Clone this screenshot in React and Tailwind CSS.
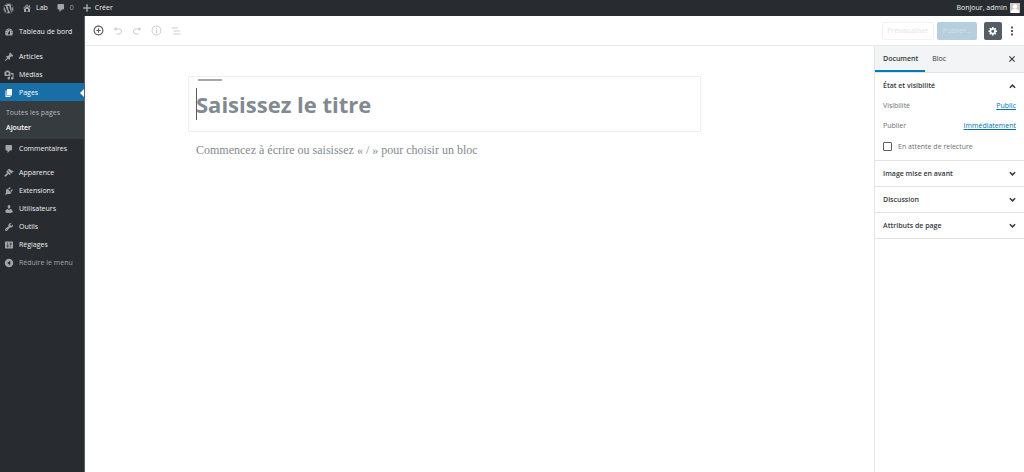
import React from "react";
import { FaWordpress } from "react-icons/fa";

const icons = {
  dashboard:
    "M3.76 17h12.48c1.34-1.63 1.76-3.73 1.76-6 0-4.41-3.58-8-8-8s-8 3.59-8 8c0 2.27.42 4.37 1.76 6zM10 4c.55 0 1 .45 1 1s-.45 1-1 1-1-.45-1-1 .45-1 1-1zM6 6c.55 0 1 .45 1 1s-.45 1-1 1-1-.45-1-1 .45-1 1-1zm8 0c.55 0 1 .45 1 1s-.45 1-1 1-1-.45-1-1 .45-1 1-1zm-5.37 5.55L12 7v6c0 1.1-.9 2-2 2s-2-.9-2-2c0-.57.24-1.08.63-1.45zM4 10c.55 0 1 .45 1 1s-.45 1-1 1-1-.45-1-1 .45-1 1-1zm12 0c.55 0 1 .45 1 1s-.45 1-1 1-1-.45-1-1 .45-1 1-1z",
  pin: "M10.44 3.02l1.82-1.82 6.36 6.35-1.83 1.82c-1.05-.68-2.48-.57-3.41.36l-.75.75c-.92.93-1.04 2.35-.35 3.41l-1.83 1.82-2.41-2.41-2.8 2.79c-.42.42-3.38 2.71-3.8 2.29s1.86-3.39 2.28-3.81l2.79-2.79L4.1 9.36l1.83-1.82c1.05.69 2.48.57 3.4-.36l.75-.75c.93-.92 1.05-2.35.36-3.41z",
  media:
    "M13 11V4c0-.55-.45-1-1-1h-1.67L9 1H5L3.67 3H2c-.55 0-1 .45-1 1v7c0 .55.45 1 1 1h10c.55 0 1-.45 1-1zM7 4.5c1.38 0 2.5 1.12 2.5 2.5S8.38 9.5 7 9.5 4.5 8.38 4.5 7 5.62 4.5 7 4.5zM14 6h5v10.5c0 1.38-1.12 2.5-2.5 2.5S14 17.88 14 16.5s1.12-2.5 2.5-2.5c.17 0 .34.02.5.05V9h-3V6zm-4 8.05V13h2v3.5c0 1.38-1.12 2.5-2.5 2.5S7 17.88 7 16.5 8.12 14 9.5 14c.17 0 .34.02.5.05z",
  page: "M6 15V2h10v13H6zm-1 1h8v2H3V5h2v11z",
  comment:
    "M5 2h9c1.1 0 2 .9 2 2v7c0 1.1-.9 2-2 2h-2l-5 5v-5H5c-1.1 0-2-.9-2-2V4c0-1.1.9-2 2-2z",
  appearance:
    "M14.48 11.06L7.41 3.99l1.5-1.5c.5-.56 2.3-.47 3.51.32 1.21.8 1.43 1.28 2.91 2.1 1.18.64 2.45 1.26 4.45.85zm-.71.71L6.7 4.7 4.93 6.47c-.39.39-.39 1.02 0 1.41l1.06 1.06c.39.39.39 1.03 0 1.42-.6.6-1.43 1.11-2.21 1.69-.35.26-.7.53-1.01.84C1.43 14.23.4 16.08 1.4 17.07c.99 1 2.84-.03 4.18-1.36.31-.31.58-.66.85-1.02.57-.78 1.08-1.61 1.69-2.21.39-.39 1.02-.39 1.41 0l1.06 1.06c.39.39 1.02.39 1.41 0z",
  plugins:
    "M13.11 4.36L9.87 7.6 8 5.73l3.24-3.24c.35-.34 1.05-.2 1.56.32.52.51.66 1.21.31 1.55zm-8 1.77l.91-1.12 9.01 9.01-1.19.84c-.71.71-2.63 1.16-3.82 1.16H6.14L4.9 17.26c-.59.59-1.54.59-2.12 0-.59-.58-.59-1.53 0-2.12l1.24-1.24v-3.88c0-1.13.4-3.19 1.09-3.89zm7.26 3.97l3.24-3.24c.34-.35 1.04-.21 1.55.31.52.51.66 1.21.31 1.55l-3.24 3.25z",
  users:
    "M10 9.25c-2.27 0-2.73-3.44-2.73-3.44C7 4.02 7.82 2 9.97 2c2.16 0 2.98 2.02 2.71 3.81 0 0-.41 3.44-2.68 3.44zm0 2.57L12.72 10c2.39 0 4.52 2.33 4.52 4.53v2.49s-3.65 1.13-7.24 1.13c-3.65 0-7.24-1.13-7.24-1.13v-2.49c0-2.25 1.94-4.48 4.47-4.48z",
  tools:
    "M16.68 9.77c-1.34 1.34-3.3 1.67-4.95.99l-5.41 6.52c-.99.99-2.59.99-3.58 0s-.99-2.59 0-3.57l6.52-5.42c-.68-1.65-.35-3.61.99-4.95 1.28-1.28 3.12-1.62 4.72-1.06l-2.89 2.89 2.82 2.82 2.86-2.87c.53 1.58.18 3.39-1.08 4.65zM3.81 16.21c.4.39 1.04.39 1.43 0 .4-.4.4-1.04 0-1.43-.39-.4-1.03-.4-1.43 0-.39.39-.39 1.03 0 1.43z",
  settings:
    "M18 16V4c0-.55-.45-1-1-1H3c-.55 0-1 .45-1 1v12c0 .55.45 1 1 1h14c.55 0 1-.45 1-1zM8 11h1c.55 0 1 .45 1 1s-.45 1-1 1H8v1.5c0 .28-.22.5-.5.5s-.5-.22-.5-.5V13H6c-.55 0-1-.45-1-1s.45-1 1-1h1V5.5c0-.28.22-.5.5-.5s.5.22.5.5V11zm5-2h-1c-.55 0-1-.45-1-1s.45-1 1-1h1V5.5c0-.28.22-.5.5-.5s.5.22.5.5V7h1c.55 0 1 .45 1 1s-.45 1-1 1h-1v5.5c0 .28-.22.5-.5.5s-.5-.22-.5-.5V9z",
  collapse: "M10 1.500a8.500 8.500 0 1 0 0 17 8.500 8.500 0 0 0 0-17zm2.500 13L6.500 10l6-4.500z",
  home: "M16 8.5l1.53 1.53-1.06 1.06L10 4.6l-6.47 6.49-1.06-1.06L10 2.5l4 4v-2h2v4zm-6-2.46l6 5.99V18H4v-5.97zM12 17v-5H8v5h4z",
  plus: "M17.500 8.500h-6V2.500h-3v6h-6v3h6v6h3v-6h6z",
  gear: "M18 12h-2.180c-.17.7-.44 1.350-.81 1.930l1.540 1.540-2.100 2.100-1.540-1.540c-.58.36-1.230.63-1.910.79V19H8v-2.180c-.68-.16-1.330-.43-1.910-.79l-1.540 1.540-2.120-2.120 1.540-1.540c-.36-.58-.63-1.230-.79-1.910H1V9.030h2.170c.16-.7.44-1.350.8-1.940L2.430 5.550l2.100-2.100 1.540 1.540c.58-.37 1.240-.64 1.930-.81V2h3v2.180c.68.16 1.330.43 1.910.79l1.540-1.540 2.120 2.120-1.540 1.540c.36.59.64 1.240.8 1.940H18V12zm-8.500 1.500c1.660 0 3-1.340 3-3s-1.340-3-3-3-3 1.340-3 3 1.340 3 3 3z",
  insert:
    "M10 1c-5 0-9 4-9 9s4 9 9 9 9-4 9-9-4-9-9-9zm0 16c-3.900 0-7-3.100-7-7s3.100-7 7-7 7 3.100 7 7-3.100 7-7 7zm1-11H9v3H6v2h3v3h2v-3h3V9h-3V6z",
  undo: "M12 5H7V2L1 6l6 4V7h5c2.200 0 4 1.800 4 4s-1.800 4-4 4H7v2h5c3.300 0 6-2.700 6-6s-2.700-6-6-6z",
  redo: "M8 5h5V2l6 4-6 4V7H8c-2.200 0-4 1.800-4 4s1.800 4 4 4h5v2H8c-3.300 0-6-2.700-6-6s2.700-6 6-6z",
  info: "M10 1a9 9 0 1 0 0 18 9 9 0 0 0 0-18zm0 16.200a7.200 7.200 0 1 1 0-14.400 7.200 7.200 0 0 1 0 14.400zM9 9h2v6H9zM9 5h2v2H9z",
  outline: "M1 3h13v2H1zM5 9h13v2H5zM5 15h14v2H5z",
  dots: "M8 1h4v4H8zm0 7h4v4H8zm0 7h4v4H8z",
  close:
    "M16 5.500L11.500 10l4.500 4.500-1.500 1.500-4.500-4.500L5.500 16 4 14.500 8.500 10 4 5.500 5.500 4l4.500 4.500L14.500 4z",
  down: "M4 5l6 6 6-6 3 3-9 9-9-9z",
  up: "M4 15l6-6 6 6 3-3-9-9-9 9z",
};

function Icon({ name, className = "size-[10px]" }) {
  return (
    <svg viewBox="0 0 20 20" fill="currentColor" fillRule="evenodd" aria-hidden="true" className={`shrink-0 ${className}`}>
      <path d={icons[name]} />
    </svg>
  );
}

function MenuItem({ icon, label }) {
  return (
    <a href="#" className="flex h-[18px] items-center gap-[5px] pl-1 pt-px text-[#eee]">
      <Icon name={icon} className="size-[10px] text-[#a0a5aa]" />
      {label}
    </a>
  );
}

function AdminBar() {
  return (
    <header className="flex h-4 shrink-0 items-center bg-[#282c31] text-[#eee]">
      <a href="#" aria-label="WordPress" className="ml-[3px] text-[#a0a5aa]">
        <FaWordpress className="size-[11px]" />
      </a>
      <a href="#" className="ml-2 flex items-center gap-1">
        <Icon name="home" className="size-[10px] text-[#a0a5aa]" />
        Lab
      </a>
      <a href="#" className="ml-2 flex items-center gap-1 text-[#a0a5aa]">
        <Icon name="comment" />
        0
      </a>
      <a href="#" className="ml-2 flex items-center gap-[3px]">
        <Icon name="plus" className="size-[10px] text-[#a0a5aa]" />
        Créer
      </a>
      <a href="#" className="ml-auto mr-1 flex items-center gap-[3px]">
        Bonjour, admin
        <svg viewBox="0 0 20 20" className="size-[10px] bg-[#c8c8c8]" aria-hidden="true">
          <circle cx="10" cy="7" r="4.500" fill="#fff" />
          <path d="M2 20c0-6 3-8 8-8s8 2 8 8z" fill="#fff" />
        </svg>
      </a>
    </header>
  );
}

function Sidebar() {
  return (
    <nav className="w-[85px] shrink-0 border-r border-[#555d66] bg-[#282c31] pt-[6px]">
      <MenuItem icon="dashboard" label="Tableau de bord" />
      <div className="mt-[7px]">
        <MenuItem icon="pin" label="Articles" />
        <MenuItem icon="media" label="Médias" />
        <a href="#" className="relative flex h-[18px] items-center gap-[5px] bg-[#186fa7] pl-1 pt-px text-white">
          <Icon name="page" />
          Pages
          <span className="absolute right-0 border-4 border-transparent border-r-white" />
        </a>
        <div className="flex h-[38px] flex-col justify-center gap-[5px] bg-[#363b40] pl-[6px] leading-[10px]">
          <a href="#" className="text-[#b4b9be]">Toutes les pages</a>
          <a href="#" className="font-semibold text-white">Ajouter</a>
        </div>
        <MenuItem icon="comment" label="Commentaires" />
      </div>
      <div className="mt-[6px]">
        <MenuItem icon="appearance" label="Apparence" />
        <MenuItem icon="plugins" label="Extensions" />
        <MenuItem icon="users" label="Utilisateurs" />
        <MenuItem icon="tools" label="Outils" />
        <MenuItem icon="settings" label="Réglages" />
        <button type="button" className="flex h-[18px] items-center gap-[5px] pl-1 pt-px text-[#a0a5aa]">
          <Icon name="collapse" />
          Réduire le menu
        </button>
      </div>
    </nav>
  );
}

function Toolbar() {
  return (
    <div className="flex h-[30px] shrink-0 items-center border-b border-[#e9eaec] pl-2 pr-[7px] text-[#555d66]">
      <div className="flex items-center gap-[9px]">
        <button type="button" aria-label="Ajouter un bloc"><Icon name="insert" className="size-[11px]" /></button>
        <button type="button" aria-label="Annuler" disabled className="text-[#ccced1]"><Icon name="undo" className="size-[10px]" /></button>
        <button type="button" aria-label="Rétablir" disabled className="text-[#ccced1]"><Icon name="redo" className="size-[10px]" /></button>
        <button type="button" aria-label="Informations" disabled className="text-[#ccced1]"><Icon name="info" className="size-[11px]" /></button>
        <button type="button" aria-label="Navigation" disabled className="text-[#ccced1]"><Icon name="outline" className="size-[10px]" /></button>
      </div>
      <div className="ml-auto flex items-center">
        <button type="button" disabled className="h-[18px] w-[52px] rounded-[2px] border border-[#f3f3f4] text-[#e2e4e7]">Prévisualiser</button>
        <button type="button" disabled className="ml-[3px] h-[18px] w-10 rounded-[2px] bg-[#b5cfdc] text-[#d0e1ea]">Publier…</button>
        <button type="button" aria-label="Réglages" className="ml-[7px] flex size-[18px] items-center justify-center rounded-[2px] bg-[#555d66] text-white">
          <Icon name="gear" />
        </button>
        <button type="button" aria-label="Plus d’outils" className="ml-[5px]"><Icon name="dots" /></button>
      </div>
    </div>
  );
}

function Panel({ title }) {
  return (
    <button type="button" className="flex h-[26px] w-full items-center justify-between border-b border-[#e2e4e7] px-2 font-semibold text-[#32373c]">
      {title}
      <Icon name="down" className="size-[7px]" />
    </button>
  );
}

function Settings() {
  return (
    <aside className="w-[150px] shrink-0 border-l border-[#e2e4e7] text-[#6c7178]">
      <div className="flex h-[27px] items-stretch border-b border-[#e2e4e7] bg-[#f3f4f5] pr-[7px]">
        <button type="button" className="px-[7px] pl-2 font-semibold text-[#32373c] shadow-[inset_0_-2px_0_#007cba]">Document</button>
        <button type="button" className="px-[7px] text-[#32373c]">Bloc</button>
        <button type="button" aria-label="Fermer" className="ml-auto text-[#32373c]"><Icon name="close" /></button>
      </div>
      <section className="border-b border-[#e2e4e7] px-2">
        <button type="button" className="flex h-[26px] w-full items-center justify-between font-semibold text-[#32373c]">
          État et visibilité
          <Icon name="up" className="size-[7px]" />
        </button>
        <div className="flex h-5 items-start justify-between pt-px">
          Visibilité
          <a href="#" className="text-[#0073aa] underline">Public</a>
        </div>
        <div className="flex h-5 items-start justify-between pt-px">
          Publier
          <a href="#" className="text-[#0073aa] underline">Immédiatement</a>
        </div>
        <label className="flex h-[21px] items-start gap-[6px] pt-[2px]">
          <input type="checkbox" className="mt-px size-[9px] appearance-none rounded-[1px] border border-[#555d66]" />
          En attente de relecture
        </label>
      </section>
      <Panel title="Image mise en avant" />
      <Panel title="Discussion" />
      <Panel title="Attributs de page" />
    </aside>
  );
}

function Editor() {
  return (
    <main className="min-w-0 flex-1 pl-[103px] pr-8 pt-[30px]">
      <div className="w-full max-w-[513px]">
        <div className="relative flex h-[56px] items-center border border-[#edeff0] px-[7px]">
          <span className="absolute left-[9px] top-[2px] h-[2px] w-6 bg-[#a8a8a8]" />
          <span className="absolute left-[7px] top-[11px] h-8 w-px bg-[#555d66]" />
          <input
            type="text"
            aria-label="Titre"
            placeholder="Saisissez le titre"
            className="h-8 w-full text-[22px] font-bold outline-none placeholder:text-[#838990]"
          />
        </div>
        <input
          type="text"
          aria-label="Contenu"
          placeholder="Commencez à écrire ou saisissez « / » pour choisir un bloc"
          className="mt-2 h-5 w-full px-2 font-['Liberation_Serif',serif] text-[12px] outline-none placeholder:text-[#838990]"
        />
      </div>
    </main>
  );
}

function App() {
  return (
    <div className="flex min-h-screen flex-col bg-white font-['Open_Sans',sans-serif] text-[7px] leading-[12px]">
      <AdminBar />
      <div className="flex flex-1">
        <Sidebar />
        <div className="flex min-w-0 flex-1 flex-col">
          <Toolbar />
          <div className="flex flex-1">
            <Editor />
            <Settings />
          </div>
        </div>
      </div>
    </div>
  );
}

export default App;
